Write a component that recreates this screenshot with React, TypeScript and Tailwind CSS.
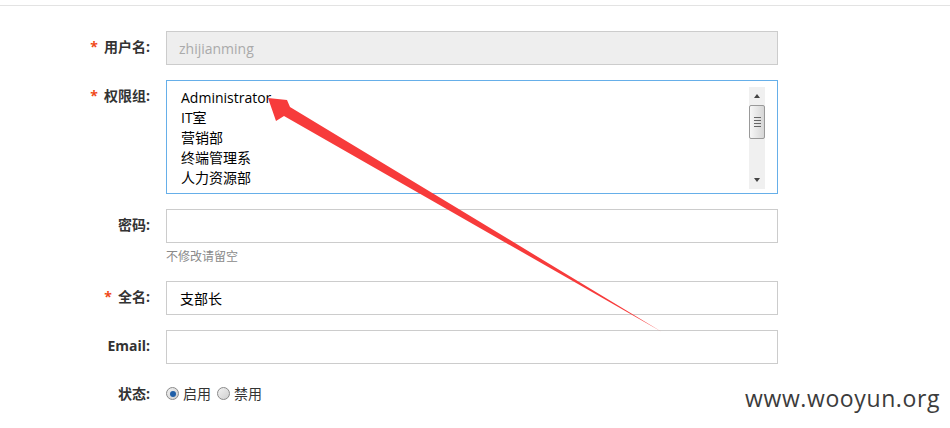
import React from "react"

const groups = ["Administrator", "IT室", "营销部", "终端管理系", "人力资源部"]

function Label({ text, required }: { text: string; required?: boolean }) {
  return (
    <div className="w-[150px] shrink-0 text-right leading-[31px] text-[14px] font-bold text-[#333]">
      {required && <span className="mr-[6px] text-[#f04a1a]">*</span>}
      {text}
    </div>
  )
}

function Scrollbar() {
  return (
    <div className="mt-[6px] mr-[12px] flex h-[102px] w-[16px] flex-col items-center bg-[#f0f0f0]">
      <div className="flex h-[18px] w-full items-center justify-center">
        <div className="h-0 w-0 border-x-[3px] border-b-[4px] border-x-transparent border-b-[#444]" />
      </div>
      <div className="flex h-[34px] w-[16px] flex-col items-center justify-center gap-[2px] rounded-[2px] border border-[#999] bg-gradient-to-r from-[#f7f7f7] to-[#d6d6d6]">
        <div className="h-px w-[7px] bg-[#666]" />
        <div className="h-px w-[7px] bg-[#666]" />
        <div className="h-px w-[7px] bg-[#666]" />
        <div className="h-px w-[7px] bg-[#666]" />
      </div>
      <div className="flex-1" />
      <div className="flex h-[18px] w-full items-center justify-center">
        <div className="h-0 w-0 border-x-[3px] border-t-[4px] border-x-transparent border-t-[#444]" />
      </div>
    </div>
  )
}

function Radio({ checked }: { checked?: boolean }) {
  return (
    <span className="inline-flex h-[13px] w-[13px] items-center justify-center rounded-full border border-[#8a8a8a] bg-gradient-to-br from-[#f2f2f2] to-[#cfcfcf]">
      {checked && <span className="h-[6px] w-[6px] rounded-full bg-[#1f5fa8]" />}
    </span>
  )
}

function Arrow() {
  return (
    <svg className="pointer-events-none absolute left-0 top-0" width="950" height="428">
      <polygon
        points="268,98 287,100 290,107 662,332 284,116 276,121"
        fill="#f73b3b"
      />
    </svg>
  )
}

export default function App() {
  return (
    <main className="relative h-[428px] w-[950px] overflow-hidden bg-white font-['Open_Sans','Noto_Sans_CJK_SC',sans-serif]">
      <div className="mt-[5px] border-t border-[#e3e3e3]" />

      <div className="flex flex-col pt-[25px]">
        <div className="flex gap-[16px]">
          <Label text="用户名:" required />
          <div className="flex h-[34px] w-[612px] items-center border border-[#cccccc] bg-[#eeeeee] px-[12px] text-[14px] text-[#aaa]">
            zhijianming
          </div>
        </div>

        <div className="mt-[15px] flex gap-[16px]">
          <Label text="权限组:" required />
          <div className="flex h-[114px] w-[612px] border border-[#66afe9] bg-white">
            <div className="flex-1 pl-[14px] pt-[7px] text-[14px] leading-[20px] text-black">
              {groups.map((g) => (
                <div key={g}>{g}</div>
              ))}
            </div>
            <Scrollbar />
          </div>
        </div>

        <div className="mt-[15px] flex gap-[16px]">
          <Label text="密码:" />
          <div className="flex flex-col">
            <div className="h-[34px] w-[612px] border border-[#cccccc] bg-white" />
            <div className="mt-[5px] text-[12px] leading-[18px] text-[#8a8a8a]">不修改请留空</div>
          </div>
        </div>

        <div className="mt-[15px] flex gap-[16px]">
          <Label text="全名:" required />
          <div className="flex h-[34px] w-[612px] items-center border border-[#cccccc] bg-white px-[13px] text-[14px] text-black">
            支部长
          </div>
        </div>

        <div className="mt-[15px] flex gap-[16px]">
          <Label text="Email:" />
          <div className="h-[34px] w-[612px] border border-[#cccccc] bg-white" />
        </div>

        <div className="mt-[14px] flex gap-[16px]">
          <Label text="状态:" />
          <div className="flex items-center gap-[4px] text-[14px] text-[#333]">
            <Radio checked />
            <span className="mr-[2px]">启用</span>
            <Radio />
            <span>禁用</span>
          </div>
        </div>
      </div>

      <Arrow />

      <div className="absolute right-[10px] top-[381px] text-[23px] tracking-[0.6px] text-[#3c3c3c]">
        www.wooyun.org
      </div>
    </main>
  )
}
